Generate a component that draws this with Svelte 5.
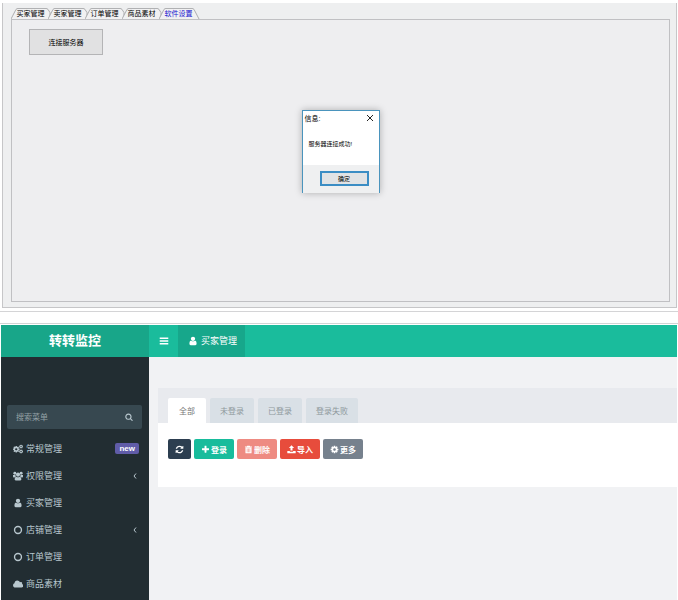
<script>
	let tabs = ['买家管理', '卖家管理', '订单管理', '商品素材', '软件设置'];
	let currentTab = $state('软件设置');

	let filters = ['全部', '未登录', '已登录', '登录失败'];
	let currentFilter = $state('全部');

	let showDialog = $state(true);
	let search = $state('');

	let menu = [
		{ name: '常规管理', icon: 'cogs', badge: 'new' },
		{ name: '权限管理', icon: 'group', children: true },
		{ name: '买家管理', icon: 'user' },
		{ name: '店铺管理', icon: 'circle', children: true },
		{ name: '订单管理', icon: 'circle' },
		{ name: '商品素材', icon: 'cloud' }
	];

	let actions = [
		{ name: '', label: '刷新', icon: 'refresh', kind: 'dark' },
		{ name: '登录', label: '登录', icon: 'plus', kind: 'green' },
		{ name: '删除', label: '删除', icon: 'trash', kind: 'pink' },
		{ name: '导入', label: '导入', icon: 'upload', kind: 'red' },
		{ name: '更多', label: '更多', icon: 'cog', kind: 'grey' }
	];

	const cog = 'M1152 896q0-106-75-181t-181-75-181 75-75 181 75 181 181 75 181-75 75-181zm512-109v222q0 12-8 23t-20 13l-185 28q-19 54-39 91 35 50 107 138 10 12 10 25t-9 23q-27 37-99 108t-94 71q-12 0-26-9l-138-108q-44 23-91 38-16 136-29 186-7 28-36 28h-222q-14 0-24.5-8.5t-11.5-21.5l-28-184q-49-16-90-37l-141 107q-10 9-25 9-14 0-25-11-126-114-165-168-7-10-7-23 0-12 8-23 15-21 51-66.5t54-70.5q-27-50-41-99l-183-27q-13-2-21-12.5t-8-23.5v-222q0-12 8-23t19-13l186-28q14-46 39-92-40-57-107-138-10-12-10-24 0-10 9-23 26-36 98.5-107.5t94.5-71.5q13 0 26 10l138 107q44-23 91-38 16-136 29-186 7-28 36-28h222q14 0 24.5 8.5t11.5 21.5l28 184q49 16 90 37l142-107q9-9 24-9 13 0 25 10 129 119 165 170 7 8 7 22 0 12-8 23-15 21-51 66.5t-54 70.5q26 50 41 98l183 28q13 2 21 12.5t8 23.5z';

	const paths = {
		cog,
		user: 'M1536 1399q0 109-62.5 187t-150.5 78h-854q-88 0-150.5-78t-62.5-187q0-85 8.5-160.5t31.5-152 58.5-131 94-89 134.5-34.5q131 128 313 128t313-128q76 0 134.5 34.5t94 89 58.5 131 31.5 152 8.5 160.5zm-256-887q0 159-112.5 271.5t-271.5 112.5-271.5-112.5-112.5-271.5 112.5-271.5 271.5-112.5 271.5 112.5 112.5 271.5z',
		search: 'M1216 832q0-185-131.5-316.5t-316.5-131.5-316.5 131.5-131.5 316.5 131.5 316.5 316.5 131.5 316.5-131.5 131.5-316.5zm512 832q0 52-38 90t-90 38q-54 0-90-38l-343-342q-179 124-399 124-143 0-273.5-55.5t-225-150-150-225-55.5-273.5 55.5-273.5 150-225 225-150 273.5-55.5 273.5 55.5 225 150 150 225 55.5 273.5q0 220-124 399l343 343q37 37 37 90z',
		plus: 'M1600 736v192q0 40-28 68t-68 28h-416v416q0 40-28 68t-68 28h-192q-40 0-68-28t-28-68v-416h-416q-40 0-68-28t-28-68v-192q0-40 28-68t68-28h416v-416q0-40 28-68t68-28h192q40 0 68 28t28 68v416h416q40 0 68 28t28 68z',
		refresh: 'M1639 1056q0 5-1 7-64 268-268 434.5t-478 166.5q-146 0-282.5-55t-243.5-157l-129 129q-19 19-45 19t-45-19-19-45v-448q0-26 19-45t45-19h448q26 0 45 19t19 45-19 45l-137 137q71 66 161 102t187 36q134 0 250-65t186-179q11-17 53-117 8-23 30-23h192q13 0 22.5 9.5t9.5 22.5zm25-800v448q0 26-19 45t-45 19h-448q-26 0-45-19t-19-45 19-45l138-138q-148-137-349-137-134 0-250 65t-186 179q-11 17-53 117-8 23-30 23h-199q-13 0-22.5-9.5t-9.5-22.5v-7q65-268 270-434.5t480-166.5q146 0 284 55.5t245 156.5l130-129q19-19 45-19t45 19 19 45z',
		bars: 'M128 288h1536v260H128zM128 766h1536v260H128zM128 1244h1536v260H128z',
		upload: 'M896 64l520 540h-320v480H696V604H376zM64 1180h500v100q0 60 60 60h544q60 0 60-60v-100h500v400q0 60-60 60H124q-60 0-60-60z',
		trash: 'M640 128h512l90 160h358v150H192V288h358zM288 520h1216v1050q0 94-94 94H382q-94 0-94-94zM560 720v740h120V720zM836 720v740h120V720zM1112 720v740h120V720z',
		cloud: 'M420 1536q-170 0-290-112T10 1150q0-130 70-232t190-154q-4-212 140-360t352-148q160 0 288 88t184 230q66-56 158-56 106 0 181 75t75 181q0 66-38 130 112 40 182 130t70 208q0 120-98 207t-234 87z'
	};
</script>

{#snippet icon(name)}
	<svg class="icon" viewBox="0 0 1792 1792" aria-hidden="true">
		{#if name == 'cogs'}
			<path fill-rule="evenodd" transform="translate(-120 240) scale(.78)" d={cog} />
			<path fill-rule="evenodd" transform="translate(1030 60) scale(.46)" d={cog} />
			<path fill-rule="evenodd" transform="translate(1030 920) scale(.46)" d={cog} />
		{:else if name == 'group'}
			<circle cx="330" cy="400" r="260" />
			<circle cx="1462" cy="400" r="260" />
			<circle cx="896" cy="640" r="370" />
			<path d="M0 700h440q20 210 150 290-210 30-310 180H150Q0 1170 0 980zM1792 700h-440q-20 210-150 290 210 30 310 180h130q150 0 150-190zM590 1020q306 180 612 0 300 20 300 460 0 200-200 200H490q-200 0-200-200 0-440 300-460z" />
		{:else if name == 'circle'}
			<circle class="ring" cx="896" cy="896" r="620" />
		{:else}
			<path fill-rule="evenodd" d={paths[name]} />
		{/if}
	</svg>
{/snippet}

<div class="page">
	<section class="window">
		<div class="tabs" role="tablist">
			{#each tabs as t}
				<button class="tab" class:active={t == currentTab} role="tab" aria-selected={t == currentTab} onclick={() => (currentTab = t)}>
					<svg class="edge" viewBox="0 0 42 12" preserveAspectRatio="none" aria-hidden="true">
						<path d={t == currentTab ? 'M0 12L5 1.5Q6 .5 7 .5H33Q34 .5 35 1.5L40 12' : 'M0 12L5 1.5Q6 .5 7 .5H35Q36 .5 37 1.5L39 5V12'} />
					</svg>
					<span>{t}</span>
				</button>
			{/each}
		</div>
		<div class="panel">
			<button class="connect" onclick={() => (showDialog = true)}>连接服务器</button>

			{#if showDialog}
				<div class="dialog" role="dialog" aria-labelledby="dialog-title">
					<div class="titlebar">
						<span id="dialog-title">信息:</span>
						<button class="close" aria-label="关闭" onclick={() => (showDialog = false)}>
							<svg viewBox="0 0 8 8" aria-hidden="true"><path d="M1 1L7 7M7 1L1 7" /></svg>
						</button>
					</div>
					<p>服务器连接成功!</p>
					<div class="buttons">
						<button class="ok" onclick={() => (showDialog = false)}>确定</button>
					</div>
				</div>
			{/if}
		</div>
	</section>

	<section class="admin">
		<header>
			<a class="logo" href="#home">转转监控</a>
			<button class="toggle" aria-label="菜单">{@render icon('bars')}</button>
			<a class="current" href="#buyers">{@render icon('user')}<span>买家管理</span></a>
		</header>
		<div class="body">
			<aside>
				<form class="search">
					<input type="text" placeholder="搜索菜单" aria-label="搜索菜单" bind:value={search} />
					<button type="button" aria-label="搜索">{@render icon('search')}</button>
				</form>
				<nav>
					{#each menu as m}
						<a href="#{m.name}">
							{@render icon(m.icon)}
							<span class="name">{m.name}</span>
							{#if m.badge}<span class="badge">{m.badge}</span>{/if}
							{#if m.children}
								<svg class="arrow" viewBox="0 0 4 6" aria-hidden="true"><path d="M3 .5L1 3L3 5.5" /></svg>
							{/if}
						</a>
					{/each}
				</nav>
			</aside>
			<main>
				<div class="filters" role="tablist">
					{#each filters as f}
						<button class:active={f == currentFilter} role="tab" aria-selected={f == currentFilter} onclick={() => (currentFilter = f)}>{f}</button>
					{/each}
				</div>
				<div class="toolbar">
					{#each actions as a}
						<button class={a.kind} aria-label={a.label}>{@render icon(a.icon)}{a.name}</button>
					{/each}
				</div>
			</main>
		</div>
	</section>
</div>

<style>
	:global(body){
		background: #fff;
	}
	.page{
		display: flex;
		flex-direction: column;
		min-height: 100vh;
		font-family: "Liberation Sans", "Noto Sans CJK SC", sans-serif;
		font-size: 8px;
	}
	button, input{
		font: inherit;
		color: inherit;
		border: 0;
		padding: 0;
		margin: 0;
		background: none;
	}
	button{
		cursor: pointer;
		white-space: nowrap;
	}
	a{
		color: inherit;
		text-decoration: none;
	}
	.icon{
		width: 10px;
		height: 10px;
		fill: currentColor;
		flex: none;
	}
	.icon .ring{
		fill: none;
		stroke: currentColor;
		stroke-width: 250;
	}

	/* desktop client */
	.window{
		margin: 3px 1px 3px 2px;
		padding: 5px 6px 5px 8px;
		border: 1px solid #c6c6c8;
		border-top: 0;
		background: #eeeff0;
		color: #000;
		font-size: 7px;
	}
	.tabs{
		display: flex;
		height: 11px;
	}
	.tab{
		position: relative;
		width: 37px;
		line-height: 11px;
	}
	.tab span{
		position: relative;
		padding-left: 2px;
	}
	.edge{
		position: absolute;
		left: 0;
		top: 0;
		width: 42px;
		height: 11px;
		fill: #f1f1f2;
		stroke: #aaabad;
		stroke-width: 1;
	}
	.tab.active{
		color: #1a16cf;
	}
	.panel{
		position: relative;
		height: 281px;
		border: 1px solid #c0c0c3;
		background: #eeeef0;
	}
	.connect{
		width: 74px;
		height: 26px;
		margin: 9px 17px;
		border: 1px solid #b4b4b6;
		background: #e1e1e2;
	}
	.dialog{
		position: absolute;
		left: 50%;
		top: 90px;
		width: 76px;
		margin-left: -39px;
		border: 1px solid #4a94bd;
		border-bottom: 0;
		background: #fff;
		box-shadow: 0 0 7px rgba(0,0,0,0.28);
		font-size: 6px;
	}
	.titlebar{
		display: flex;
		justify-content: space-between;
		align-items: center;
		height: 14px;
		padding: 0 5px 0 2px;
		font-size: 7px;
	}
	.close{
		display: flex;
	}
	.close svg{
		width: 8px;
		height: 8px;
		stroke: #222;
		stroke-width: 1;
	}
	.dialog p{
		margin: 0;
		padding: 14px 6px 16px;
		line-height: 10px;
		white-space: nowrap;
	}
	.buttons{
		display: flex;
		justify-content: flex-end;
		padding: 6px 10px 7px;
		background: #eff0f1;
	}
	.ok{
		width: 49px;
		height: 15px;
		border: 2px solid #3b8dc4;
		background: #e1e3e5;
	}

	/* web admin */
	.admin{
		display: flex;
		flex-direction: column;
		flex: 1;
		border-top: 1px solid #d2d4d4;
		margin-top: 12px;
		padding: 1px 1px 0;
		position: relative;
	}
	.admin::before{
		content: "";
		position: absolute;
		left: 0;
		right: 0;
		top: -13px;
		height: 1px;
		background: #d4d4d6;
	}
	header{
		display: flex;
		height: 32px;
		background: #1abc9c;
		color: #fff;
		font-size: 9px;
	}
	.logo{
		width: 148px;
		background: #18a689;
		line-height: 32px;
		font-size: 13px;
		font-weight: bold;
		text-align: center;
	}
	.toggle{
		display: flex;
		align-items: center;
		justify-content: center;
		width: 29px;
	}
	.current{
		display: flex;
		align-items: center;
		gap: 3px;
		padding: 0 8px 0 10px;
		background: #17a78b;
		line-height: 12px;
	}
	.body{
		display: flex;
		flex: 1;
	}
	aside{
		width: 148px;
		background: #222d32;
		color: #b8c7ce;
	}
	.search{
		display: flex;
		height: 24px;
		margin: 48px 7px 6px 6px;
		border-radius: 2px;
		background: #374850;
	}
	.search input{
		flex: 1;
		min-width: 0;
		padding-left: 9px;
		outline: 0;
	}
	.search input::placeholder{
		color: #93a0a5;
		opacity: 1;
	}
	.search button{
		display: flex;
		align-items: center;
		justify-content: center;
		width: 27px;
	}
	.search .icon{
		width: 8px;
		height: 8px;
	}
	nav a{
		display: flex;
		align-items: center;
		gap: 3px;
		height: 27px;
		padding: 0 10px 0 12px;
		font-size: 9px;
	}
	.name{
		flex: 1;
	}
	.badge{
		padding: 0 4px;
		border-radius: 2px;
		background: #605ca8;
		color: #fff;
		font-size: 8px;
		font-weight: bold;
		line-height: 11px;
	}
	.arrow{
		width: 4px;
		height: 6px;
		margin-right: 2px;
		fill: none;
		stroke: currentColor;
	}
	main{
		flex: 1;
		min-width: 0;
		padding: 31px 0 0 9px;
		background: #f1f2f4;
	}
	.filters{
		display: flex;
		align-items: flex-end;
		gap: 4px;
		height: 35px;
		padding-left: 10px;
		background: #e8eaee;
	}
	.filters button{
		height: 25px;
		padding: 0 10px;
		border-radius: 2px 2px 0 0;
		background: #d9e0e6;
		color: #8f999d;
	}
	.filters .active{
		padding: 0 11px;
		background: #fff;
		color: #777;
	}
	.toolbar{
		display: flex;
		gap: 3px;
		padding: 16px 10px 28px;
		background: #fff;
	}
	.toolbar button{
		display: flex;
		align-items: center;
		justify-content: center;
		gap: 1px;
		height: 20px;
		padding: 0 7px;
		border-radius: 2px;
		color: #fff;
		font-weight: bold;
	}
	.toolbar .icon{
		width: 9px;
		height: 9px;
	}
	.toolbar .dark{
		background: #2c3e50;
	}
	.toolbar .green{
		background: #18bc9c;
	}
	.toolbar .pink{
		background: #ee8b82;
	}
	.toolbar .red{
		background: #e74c3c;
	}
	.toolbar .grey{
		background: #76818d;
	}
</style>
